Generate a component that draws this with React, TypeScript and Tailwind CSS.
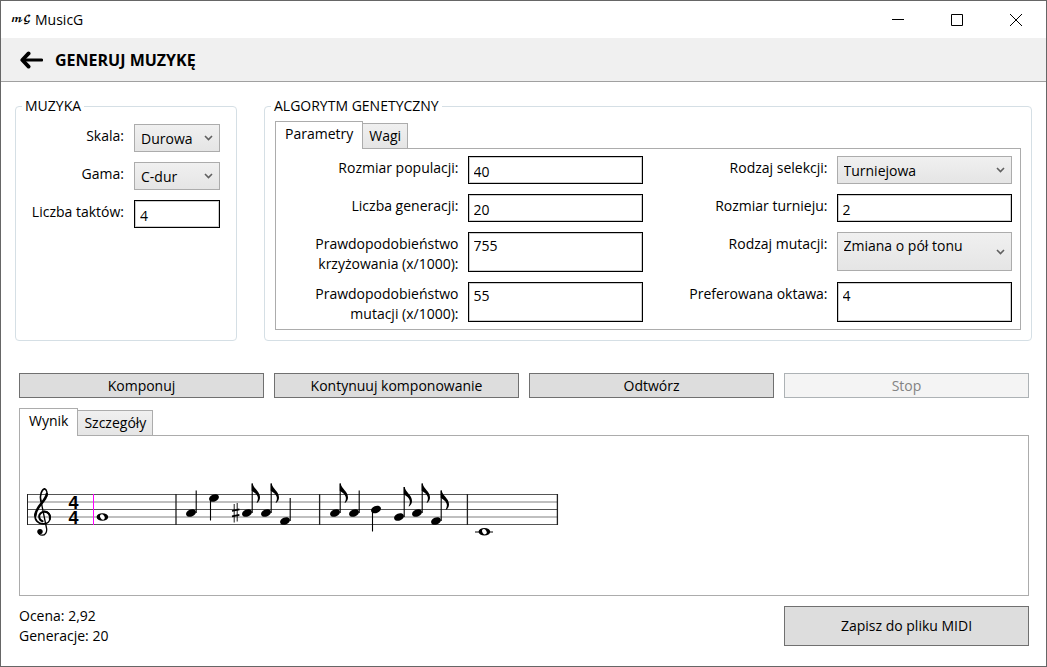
import React from "react";

const BUTTON =
  "h-[25px] border border-[#707070] bg-[#dddddd] text-center leading-5 disabled:border-[#adb2b5] disabled:bg-[#f4f4f4] disabled:text-[#838383]";

type FieldProps = { id: string; label: string; value: string; tall?: boolean };

function Label({ id, text }: { id: string; text: string }) {
  return (
    <label htmlFor={id} className="-mb-0.5 pt-0.5 text-right leading-5">
      {text}
    </label>
  );
}

function TextField({ id, label, value, tall }: FieldProps) {
  return (
    <>
      <Label id={id} text={label} />
      <input
        id={id}
        defaultValue={value}
        className={
          "w-full min-w-0 border border-black bg-white pl-[5px] pt-0.5 leading-5 shadow-[inset_0_0_0_1px_#cccccc] outline-none " +
          (tall ? "h-10 pb-4" : "h-7")
        }
      />
    </>
  );
}

function SelectField({ id, label, value, tall }: FieldProps) {
  return (
    <>
      <Label id={id} text={label} />
      <div className="relative">
        <select
          id={id}
          defaultValue={value}
          className={
            "w-full appearance-none border border-[#acacac] bg-linear-to-b from-[#f0f0f0] to-[#e5e5e5] pl-1.5 pt-0.5 leading-5 outline-none " +
            (tall ? "h-[39px] pb-3.5" : "h-7")
          }
        >
          <option>{value}</option>
        </select>
        <svg
          viewBox="0 0 9 6"
          className="pointer-events-none absolute inset-y-0 right-[7px] my-auto h-1.5 w-[9px]"
          fill="none"
          stroke="#606060"
          strokeWidth="1.6"
        >
          <path d="M1 1 L4.5 4.5 L8 1" />
        </svg>
      </div>
    </>
  );
}

function Tabs({ active, other }: { active: string; other: string }) {
  return (
    <div role="tablist" className="flex items-end">
      <button
        role="tab"
        aria-selected="true"
        className="relative -mb-px h-7 border border-b-0 border-[#acacac] bg-white px-[9px] pb-1 leading-5"
      >
        {active}
      </button>
      <button
        role="tab"
        aria-selected="false"
        className="h-[25px] border border-b-0 border-l-0 border-[#acacac] bg-linear-to-b from-[#f0f0f0] to-[#e5e5e5] px-1.5 leading-5"
      >
        {other}
      </button>
    </div>
  );
}

type Note = { x: number; y: number; stem: number; down?: boolean; flag?: boolean };

const NOTES: Note[] = [
  { x: 191, y: 513, stem: 490.5 },
  { x: 214, y: 498, stem: 520.5, down: true },
  { x: 247, y: 513, stem: 483.5, flag: true },
  { x: 266, y: 513, stem: 483.5, flag: true },
  { x: 285, y: 521, stem: 498 },
  { x: 335, y: 513, stem: 483.5, flag: true },
  { x: 354, y: 513, stem: 490.5 },
  { x: 376, y: 509.5, stem: 531.5, down: true },
  { x: 399, y: 517, stem: 487, flag: true },
  { x: 417, y: 513, stem: 483.5, flag: true },
  { x: 436, y: 521, stem: 490.5, flag: true },
];

function NoteMark({ x, y, stem, down, flag }: Note) {
  const sx = down ? x - 3.5 : x + 5.2;
  return (
    <g>
      <ellipse cx={x} cy={y} rx="5.1" ry="3.6" transform={`rotate(-22 ${x} ${y})`} />
      <path d={`M${sx} ${y} V${stem}`} stroke="#000" strokeWidth="1.1" />
      {flag && (
        <path
          d={`M${sx - 0.5} ${stem} h1 c0.5 5 7.5 8 7.3 14 c0 2 -1 4 -3 5.6 l-0.4 -0.4 c2.6 -4.8 1.6 -8.2 -4.9 -12 z`}
        />
      )}
    </g>
  );
}

function WholeNote({ x, y }: { x: number; y: number }) {
  return (
    <g>
      <ellipse cx={x} cy={y} rx="5.8" ry="3.8" />
      <ellipse cx={x} cy={y} rx="2.1" ry="2.8" fill="#fff" transform={`rotate(-30 ${x} ${y})`} />
    </g>
  );
}

function Score() {
  return (
    <svg viewBox="20 478 545 66" className="h-[66px] w-[545px]" role="img" aria-label="Nuty">
      <g fill="none" stroke="#555" strokeWidth="1">
        <path d="M27 494.5 H558 M27 509.5 H558 M27 524.5 H558" />
        <path d="M27 502 H558 M27 517 H558" stroke="#aaa" strokeWidth="1.6" />
      </g>
      <g fill="none" stroke="#222" strokeWidth="1.3">
        <path d="M27.5 494 V525" strokeWidth="1" />
        <path d="M176 494 V525 M319.6 494 V525 M467.4 494 V525 M557.4 494 V525" />
      </g>
      <path d="M93.5 494 V525" stroke="#ff00ff" strokeWidth="1" />

      <g fill="none" stroke="#000" strokeLinecap="round" strokeLinejoin="round">
        <path
          d="M40.8 501 C39.6 495 41.6 489.6 44.6 488.8 C46.8 489.8 47.4 493.2 46.6 496"
          strokeWidth="1.6"
        />
        <path d="M46.8 494 C46 501.5 35.4 506.5 35.4 515.5" strokeWidth="2.5" />
        <path
          d="M35 514 C34.4 520.5 38.4 523.9 43.2 523.9 C47.8 523.9 50.2 520.8 50.2 517.4 C50.2 513.8 47.6 511.4 44.4 511.4"
          strokeWidth="1.6"
        />
        <path
          d="M49.8 519 C50.6 515.4 48.4 511.8 44.6 511.8 C41 511.8 38.8 514.6 39.2 517.2 C39.5 519.4 41 520.8 42.6 521.2"
          strokeWidth="2"
        />
        <path
          d="M40.8 500 L46.6 528.5 C47.2 532.4 45 535.2 42.2 535.2 C40.2 535.2 38.6 534 38.4 532"
          strokeWidth="1.3"
        />
      </g>
      <circle cx="40" cy="531.6" r="2.7" />

      <g
        fontFamily="'Liberation Sans', sans-serif"
        fontWeight="700"
        fontSize="18"
        textAnchor="middle"
      >
        <text x="73.5" y="509">4</text>
        <text x="73.5" y="524">4</text>
      </g>

      <WholeNote x={102.4} y={517} />
      {NOTES.map((n) => (
        <NoteMark key={n.x} {...n} />
      ))}
      <g fill="none" stroke="#000">
        <path d="M234.2 504 V522.5 M237.2 503 V521.5" strokeWidth="0.9" />
        <path d="M232 511 L239.4 509.4 M232 516.4 L239.4 514.8" strokeWidth="1.7" />
        <path d="M475 532 H493" strokeWidth="1" />
      </g>
      <WholeNote x={484.4} y={531.7} />
    </svg>
  );
}

export default function App() {
  return (
    <div className="flex min-h-screen flex-col border border-[#666666] bg-white font-['Open_Sans','Noto_Sans',sans-serif] text-sm text-black">
      <header>
        <div className="flex h-[37px] items-center pl-2.5">
          <span
            aria-hidden="true"
            className="w-6 whitespace-nowrap font-['DejaVu_Math_TeX_Gyre','Liberation_Serif',serif] text-[9px] leading-3"
          >
            𝓶𝓖
          </span>
          <span className="flex-1">MusicG</span>
          <div className="flex gap-[47px] pr-6">
            <button aria-label="Minimalizuj">
              <svg viewBox="0 0 12 12" className="size-3" stroke="#000" fill="none">
                <path d="M0 5.5 H12" />
              </svg>
            </button>
            <button aria-label="Maksymalizuj">
              <svg viewBox="0 0 12 12" className="size-3" stroke="#000" fill="none">
                <path d="M0.5 0.5 H11.5 V11.5 H0.5 Z" />
              </svg>
            </button>
            <button aria-label="Zamknij">
              <svg viewBox="0 0 12 12" className="size-3" stroke="#000" fill="none">
                <path d="M0 0 L12 12 M12 0 L0 12" />
              </svg>
            </button>
          </div>
        </div>
        <div className="flex h-11 items-center gap-3 border-b border-[#a0a0a0] bg-[#f0f0f0] pl-[19px]">
          <button aria-label="Wstecz">
            <svg
              viewBox="0 0 23 18"
              className="h-[18px] w-[23px]"
              fill="none"
              stroke="#000"
              strokeLinecap="round"
              strokeLinejoin="round"
            >
              <path d="M3 9 H21.5" strokeWidth="3.2" />
              <path d="M8.6 2.4 L2.3 9 L8.6 15.6" strokeWidth="3.8" />
            </svg>
          </button>
          <h1 className="text-base font-bold">GENERUJ MUZYKĘ</h1>
        </div>
      </header>

      <main className="flex flex-1 flex-col pt-3.5">
        <div className="flex gap-[27px] px-3.5">
          <fieldset className="w-[222px] rounded border border-[#d5dfe5] px-1.5 pb-1.5">
            <legend className="px-[3px] leading-5">MUZYKA</legend>
            <div className="grid grid-cols-[1fr_86px] gap-x-2.5 gap-y-2.5 pr-2.5 pt-2">
              <SelectField id="skala" label="Skala:" value="Durowa" />
              <SelectField id="gama" label="Gama:" value="C-dur" />
              <TextField id="takty" label="Liczba taktów:" value="4" />
            </div>
          </fieldset>

          <fieldset className="min-w-0 flex-1 rounded border border-[#d5dfe5] px-1.5 pb-2.5">
            <legend className="px-[3px] leading-5">ALGORYTM GENETYCZNY</legend>
            <div className="px-1 pt-[5px]">
              <Tabs active="Parametry" other="Wagi" />
              <div className="grid grid-cols-4 gap-x-[9px] gap-y-2.5 border border-[#acacac] py-[7px] pl-[7px] pr-2">
                <TextField id="populacja" label="Rozmiar populacji:" value="40" />
                <SelectField id="selekcja" label="Rodzaj selekcji:" value="Turniejowa" />
                <TextField id="generacje" label="Liczba generacji:" value="20" />
                <TextField id="turniej" label="Rozmiar turnieju:" value="2" />
                <TextField
                  id="krzyzowanie"
                  label="Prawdopodobieństwo krzyżowania (x/1000):"
                  value="755"
                  tall
                />
                <SelectField id="mutacja" label="Rodzaj mutacji:" value="Zmiana o pół tonu" tall />
                <TextField
                  id="prawd-mutacji"
                  label="Prawdopodobieństwo mutacji (x/1000):"
                  value="55"
                  tall
                />
                <TextField id="oktawa" label="Preferowana oktawa:" value="4" tall />
              </div>
            </div>
          </fieldset>
        </div>

        <div className="flex flex-col gap-2.5 pl-[18px] pr-[17px] pt-8">
          <div className="grid grid-cols-4 gap-2.5">
            <button className={BUTTON}>Komponuj</button>
            <button className={BUTTON}>Kontynuuj komponowanie</button>
            <button className={BUTTON}>Odtwórz</button>
            <button className={BUTTON} disabled>
              Stop
            </button>
          </div>
          <section>
            <Tabs active="Wynik" other="Szczegóły" />
            <div className="h-[161px] border border-[#acacac] pt-[42px]">
              <Score />
            </div>
          </section>
          <footer className="grid grid-cols-4 gap-2.5">
            <div className="col-span-3 leading-5">
              <p>Ocena: 2,92</p>
              <p>Generacje: 20</p>
            </div>
            <button className="h-10 border border-[#707070] bg-[#dddddd]">
              Zapisz do pliku MIDI
            </button>
          </footer>
        </div>
      </main>
    </div>
  );
}
